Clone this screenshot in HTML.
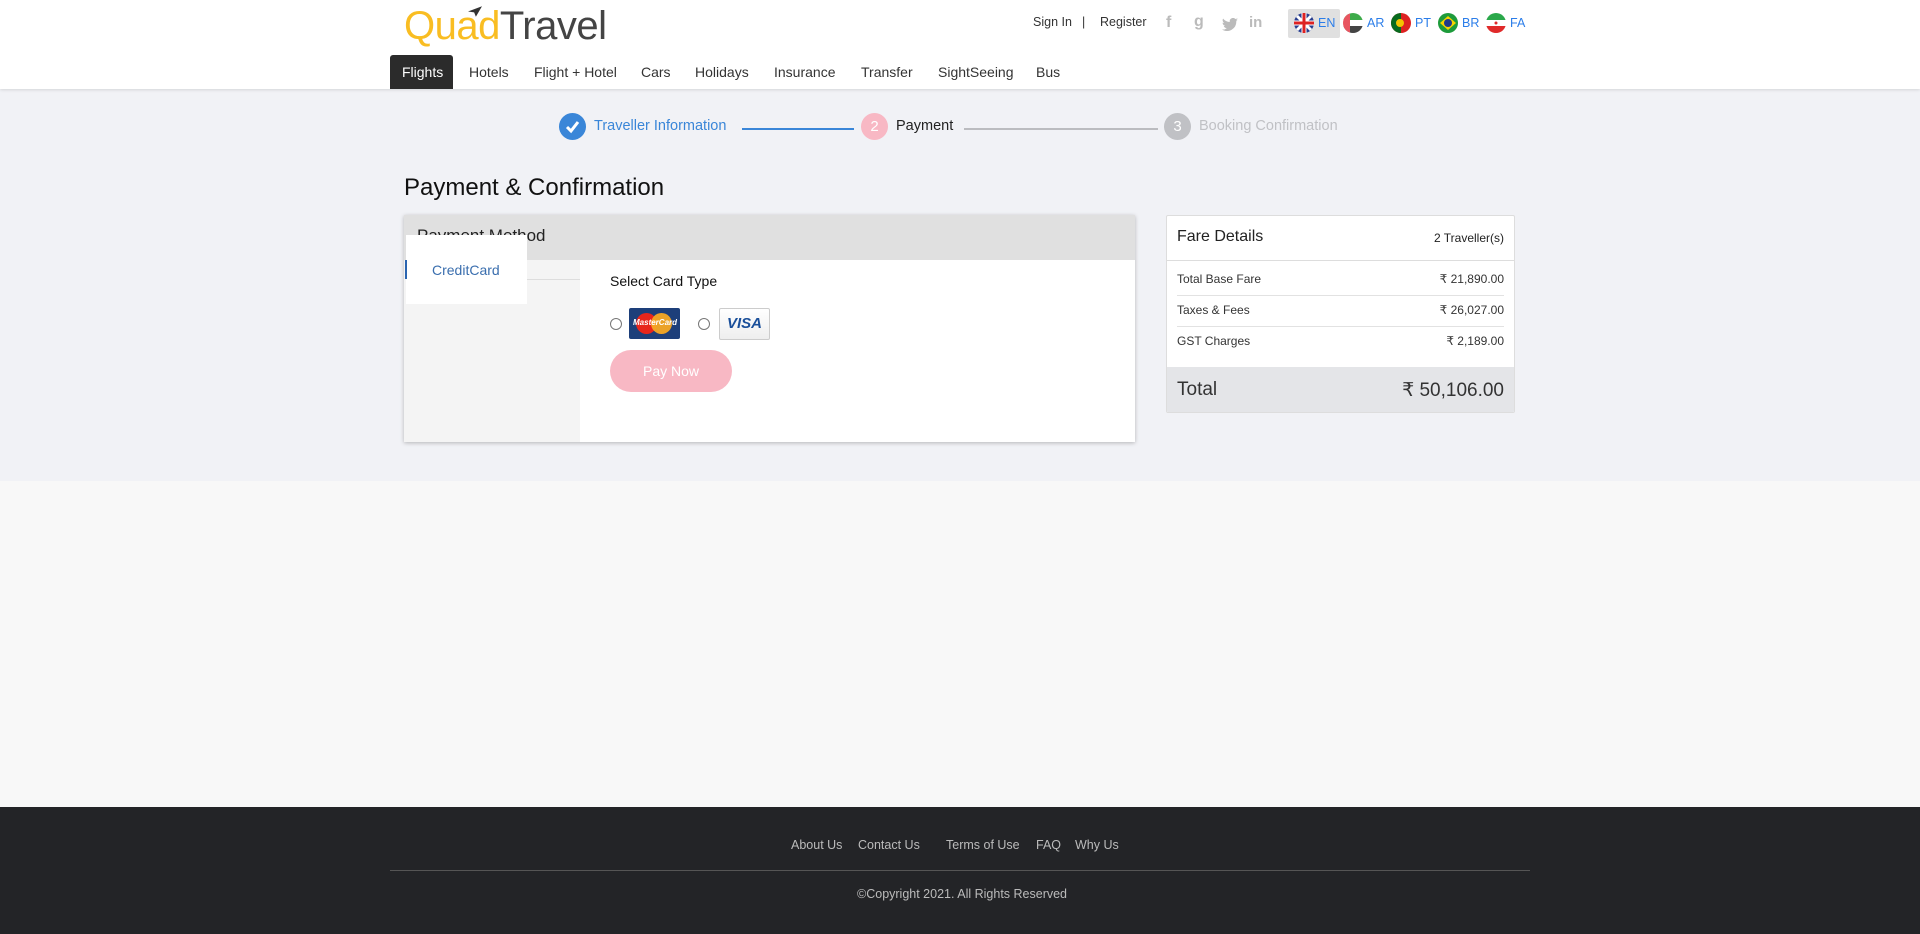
<!DOCTYPE html>
<html><head><meta charset="utf-8"><style>
*{box-sizing:border-box;margin:0;padding:0}
body{width:1920px;height:934px;font-family:"Liberation Sans",sans-serif;background:#f8f8f8;position:relative;overflow:hidden;color:#222}
.abs{position:absolute}
#hdr{left:0;top:0;width:1920px;height:89px;background:#fff;box-shadow:0 1px 3px rgba(0,0,0,.12);z-index:2}
.logo{left:404px;top:4px;font-size:40px;letter-spacing:-0.5px;white-space:nowrap}
.nav span{position:absolute;top:64px;font-size:14px;color:#333}
.tab{left:390px;top:55px;width:63px;height:34px;background:#2b2b2b;border-radius:3px 3px 0 0}
.top{font-size:12.5px;color:#333;top:15px}
#band{left:0;top:89px;width:1920px;height:392px;background:#f1f2f6}
.circ{width:27px;height:27px;border-radius:50%;color:#fff;font-size:15px;text-align:center;line-height:27px}
.st{font-size:14.5px;top:118px}
.card{background:#fff;box-shadow:0 1px 4px rgba(0,0,0,.25)}
.row{position:absolute;left:10px;right:10px;font-size:12px;color:#333;display:flex;justify-content:space-between}
.ft{color:#bbb;font-size:12.5px}
</style></head><body>
<div id="hdr" class="abs">
 <div class="abs logo"><span style="color:#f9bd22">Quad</span><span style="color:#444">Travel</span></div>
 <svg class="abs" style="left:468px;top:6px" width="14" height="11" viewBox="0 0 16 12"><path d="M0 6 L16 0 L9 12 L7 7Z" fill="#333"/></svg>
 <div class="abs tab"></div>
 <div class="nav">
  <span style="left:402px;color:#fff">Flights</span>
  <span style="left:469px">Hotels</span>
  <span style="left:534px">Flight + Hotel</span>
  <span style="left:641px">Cars</span>
  <span style="left:695px">Holidays</span>
  <span style="left:774px">Insurance</span>
  <span style="left:861px">Transfer</span>
  <span style="left:938px">SightSeeing</span>
  <span style="left:1036px">Bus</span>
 </div>
 <span class="abs top" style="left:1033px">Sign In</span>
 <span class="abs top" style="left:1082px">|</span>
 <span class="abs top" style="left:1100px">Register</span>
 <span class="abs" style="left:1166px;top:14px;color:#bbb;font-size:16px;font-weight:bold">f</span>
 <span class="abs" style="left:1194px;top:13px;color:#bbb;font-size:16px;font-weight:bold">g</span>
 <svg class="abs" style="left:1222px;top:18px" width="16" height="13" viewBox="0 0 16 13"><path d="M16 1.5c-.6.3-1.2.4-1.9.5.7-.4 1.2-1 1.4-1.8-.6.4-1.3.6-2.1.8A3.300 3.3 0 0 0 7.8 4 9.3 9.3 0 0 1 1.1.6 3.3 3.3 0 0 0 2.1 5c-.5 0-1-.2-1.5-.4 0 1.6 1.1 2.9 2.6 3.2-.5.1-1 .2-1.5.1.4 1.3 1.6 2.300 3.1 2.3A6.6 6.6 0 0 1 0 11.5 9.3 9.3 0 0 0 14.3 3.2V2.8c.7-.4 1.2-1 1.7-1.3z" fill="#bbb"/></svg>
 <span class="abs" style="left:1249px;top:14px;color:#bbb;font-size:15px;font-weight:bold">in</span>
 <div class="abs" style="left:1288px;top:9px;width:52px;height:29px;background:#e0e0e0;border-radius:2px"></div>
 <svg class="abs" style="left:1294px;top:13px" width="20" height="20" viewBox="0 0 20 20"><circle cx="10" cy="10" r="10" fill="#2a3f8f"/><path d="M3 3L17 17M17 3L3 17" stroke="#fff" stroke-width="3"/><path d="M10 0V20M0 10H20" stroke="#fff" stroke-width="5"/><path d="M10 0V20M0 10H20" stroke="#d22" stroke-width="3"/></svg>
 <span class="abs top" style="left:1318px;top:16px;color:#2b7de9">EN</span>
 <svg class="abs" style="left:1343px;top:13px" width="20" height="20" viewBox="0 0 20 20"><clipPath id="c"><circle cx="10" cy="10" r="10"/></clipPath><g clip-path="url(#c)"><rect width="20" height="7" fill="#3dab4a"/><rect y="7" width="20" height="6" fill="#fff"/><rect y="13" width="20" height="7" fill="#444"/><rect width="7" height="20" fill="#e85560"/></g></svg>
 <span class="abs top" style="left:1367px;top:16px;color:#2b7de9">AR</span>
 <svg class="abs" style="left:1391px;top:13px" width="20" height="20" viewBox="0 0 20 20"><circle cx="10" cy="10" r="10" fill="#d22"/><path d="M10 0A10 10 0 0 0 10 20Z" fill="#076b1e"/><circle cx="9" cy="10" r="4" fill="#f3c400"/></svg>
 <span class="abs top" style="left:1415px;top:16px;color:#2b7de9">PT</span>
 <svg class="abs" style="left:1438px;top:13px" width="20" height="20" viewBox="0 0 20 20"><circle cx="10" cy="10" r="10" fill="#1d9b3b"/><path d="M10 3L18 10L10 17L2 10Z" fill="#f5d400"/><circle cx="10" cy="10" r="4" fill="#203a8a"/></svg>
 <span class="abs top" style="left:1462px;top:16px;color:#2b7de9">BR</span>
 <svg class="abs" style="left:1486px;top:13px" width="20" height="20" viewBox="0 0 20 20"><clipPath id="d"><circle cx="10" cy="10" r="10"/></clipPath><g clip-path="url(#d)"><rect width="20" height="7" fill="#2aa84a"/><rect y="7" width="20" height="6" fill="#fff"/><rect y="13" width="20" height="7" fill="#e02a2a"/></g><circle cx="10" cy="10" r="1.5" fill="#e02a2a"/></svg>
 <span class="abs top" style="left:1510px;top:16px;color:#2b7de9">FA</span>
</div>

<div id="band" class="abs"></div>
<div class="abs circ" style="left:559px;top:113px;background:#3a86d8">
 <svg width="27" height="27" viewBox="0 0 27 27"><path d="M8 14l4 4 7-9" stroke="#fff" stroke-width="3" fill="none"/></svg></div>
<span class="abs st" style="left:594px;color:#3a86d8">Traveller Information</span>
<div class="abs" style="left:742px;top:128px;width:112px;height:2px;background:#3a86d8"></div>
<div class="abs circ" style="left:861px;top:113px;background:#f8b8c4">2</div>
<span class="abs st" style="left:896px;color:#222">Payment</span>
<div class="abs" style="left:964px;top:128px;width:194px;height:2px;background:#bbbcc0"></div>
<div class="abs circ" style="left:1164px;top:113px;background:#c0c1c5">3</div>
<span class="abs st" style="left:1199px;color:#c0c1c5">Booking Confirmation</span>

<div class="abs" style="left:404px;top:174px;font-size:24px;color:#111">Payment &amp; Confirmation</div>

<div class="abs card" style="left:404px;top:215px;width:731px;height:227px">
 <div class="abs" style="left:0;top:0;width:731px;height:45px;background:#e0e0e0"></div>
 <div class="abs" style="left:13px;top:11px;font-size:17px;color:#222">Payment Method</div>
 <div class="abs" style="left:0;top:45px;width:176px;height:182px;background:#f4f4f4"></div>
 <div class="abs" style="left:2px;top:64px;width:174px;height:1px;background:#ddd"></div>
 <div class="abs" style="left:2px;top:20px;width:121px;height:69px;background:#fff"></div>
 <div class="abs" style="left:1px;top:45px;width:2px;height:19px;background:#2a64b0"></div>
 <div class="abs" style="left:28px;top:47px;font-size:14px;color:#3a6eae">CreditCard</div>
 <div class="abs" style="left:206px;top:58px;font-size:14px;color:#111">Select Card Type</div>
 <div class="abs" style="left:206px;top:103px;width:12px;height:12px;border:1px solid #777;border-radius:50%"></div>
 <div class="abs" style="left:225px;top:93px;width:51px;height:31px;background:#1d3f7a;border-radius:2px">
  <div class="abs" style="left:7px;top:5px;width:21px;height:21px;border-radius:50%;background:#e8261c"></div>
  <div class="abs" style="left:22px;top:5px;width:21px;height:21px;border-radius:50%;background:#f7a823;opacity:.95"></div>
  <div class="abs" style="left:4px;top:10px;font-size:8px;color:#fff;font-style:italic;font-weight:bold">MasterCard</div>
 </div>
 <div class="abs" style="left:294px;top:103px;width:12px;height:12px;border:1px solid #777;border-radius:50%"></div>
 <div class="abs" style="left:315px;top:93px;width:51px;height:32px;background:linear-gradient(#fff,#eee);border:1px solid #ccc;border-radius:2px;text-align:center;font:italic bold 15px 'Liberation Sans',sans-serif;color:#1a4f9a;line-height:30px">VISA</div>
 <div class="abs" style="left:206px;top:135px;width:122px;height:42px;background:#f8b8c4;border-radius:21px;color:#fff;font-size:14px;text-align:center;line-height:42px">Pay Now</div>
</div>

<div class="abs" style="left:1166px;top:215px;width:349px;height:198px;background:#fff;border:1px solid #ddd;border-radius:2px;overflow:hidden">
 <div class="abs" style="left:10px;top:12px;font-size:16px;color:#222">Fare Details</div>
 <div class="abs" style="right:10px;top:15px;font-size:12px;color:#222">2 Traveller(s)</div>
 <div class="abs" style="left:0;right:0;top:44px;height:1px;background:#ddd"></div>
 <div class="row" style="top:56px"><span>Total Base Fare</span><span>₹ 21,890.00</span></div>
 <div class="abs" style="left:10px;right:10px;top:79px;height:1px;background:#e2e2e2"></div>
 <div class="row" style="top:87px"><span>Taxes &amp; Fees</span><span>₹ 26,027.00</span></div>
 <div class="abs" style="left:10px;right:10px;top:110px;height:1px;background:#e2e2e2"></div>
 <div class="row" style="top:118px"><span>GST Charges</span><span>₹ 2,189.00</span></div>
 <div class="abs" style="left:0;right:0;top:151px;height:47px;background:#e4e5e8"></div>
 <div class="row" style="top:163px;font-size:19px"><span style="color:#333">Total</span><span>₹ 50,106.00</span></div>
</div>

<div class="abs" style="left:0;top:807px;width:1920px;height:127px;background:#232427"></div>
<span class="abs ft" style="left:791px;top:838px">About Us</span>
<span class="abs ft" style="left:858px;top:838px">Contact Us</span>
<span class="abs ft" style="left:946px;top:838px">Terms of Use</span>
<span class="abs ft" style="left:1036px;top:838px">FAQ</span>
<span class="abs ft" style="left:1075px;top:838px">Why Us</span>
<div class="abs" style="left:390px;top:870px;width:1140px;height:1px;background:#555"></div>
<span class="abs ft" style="left:857px;top:887px">©Copyright 2021. All Rights Reserved</span>
</body></html>
